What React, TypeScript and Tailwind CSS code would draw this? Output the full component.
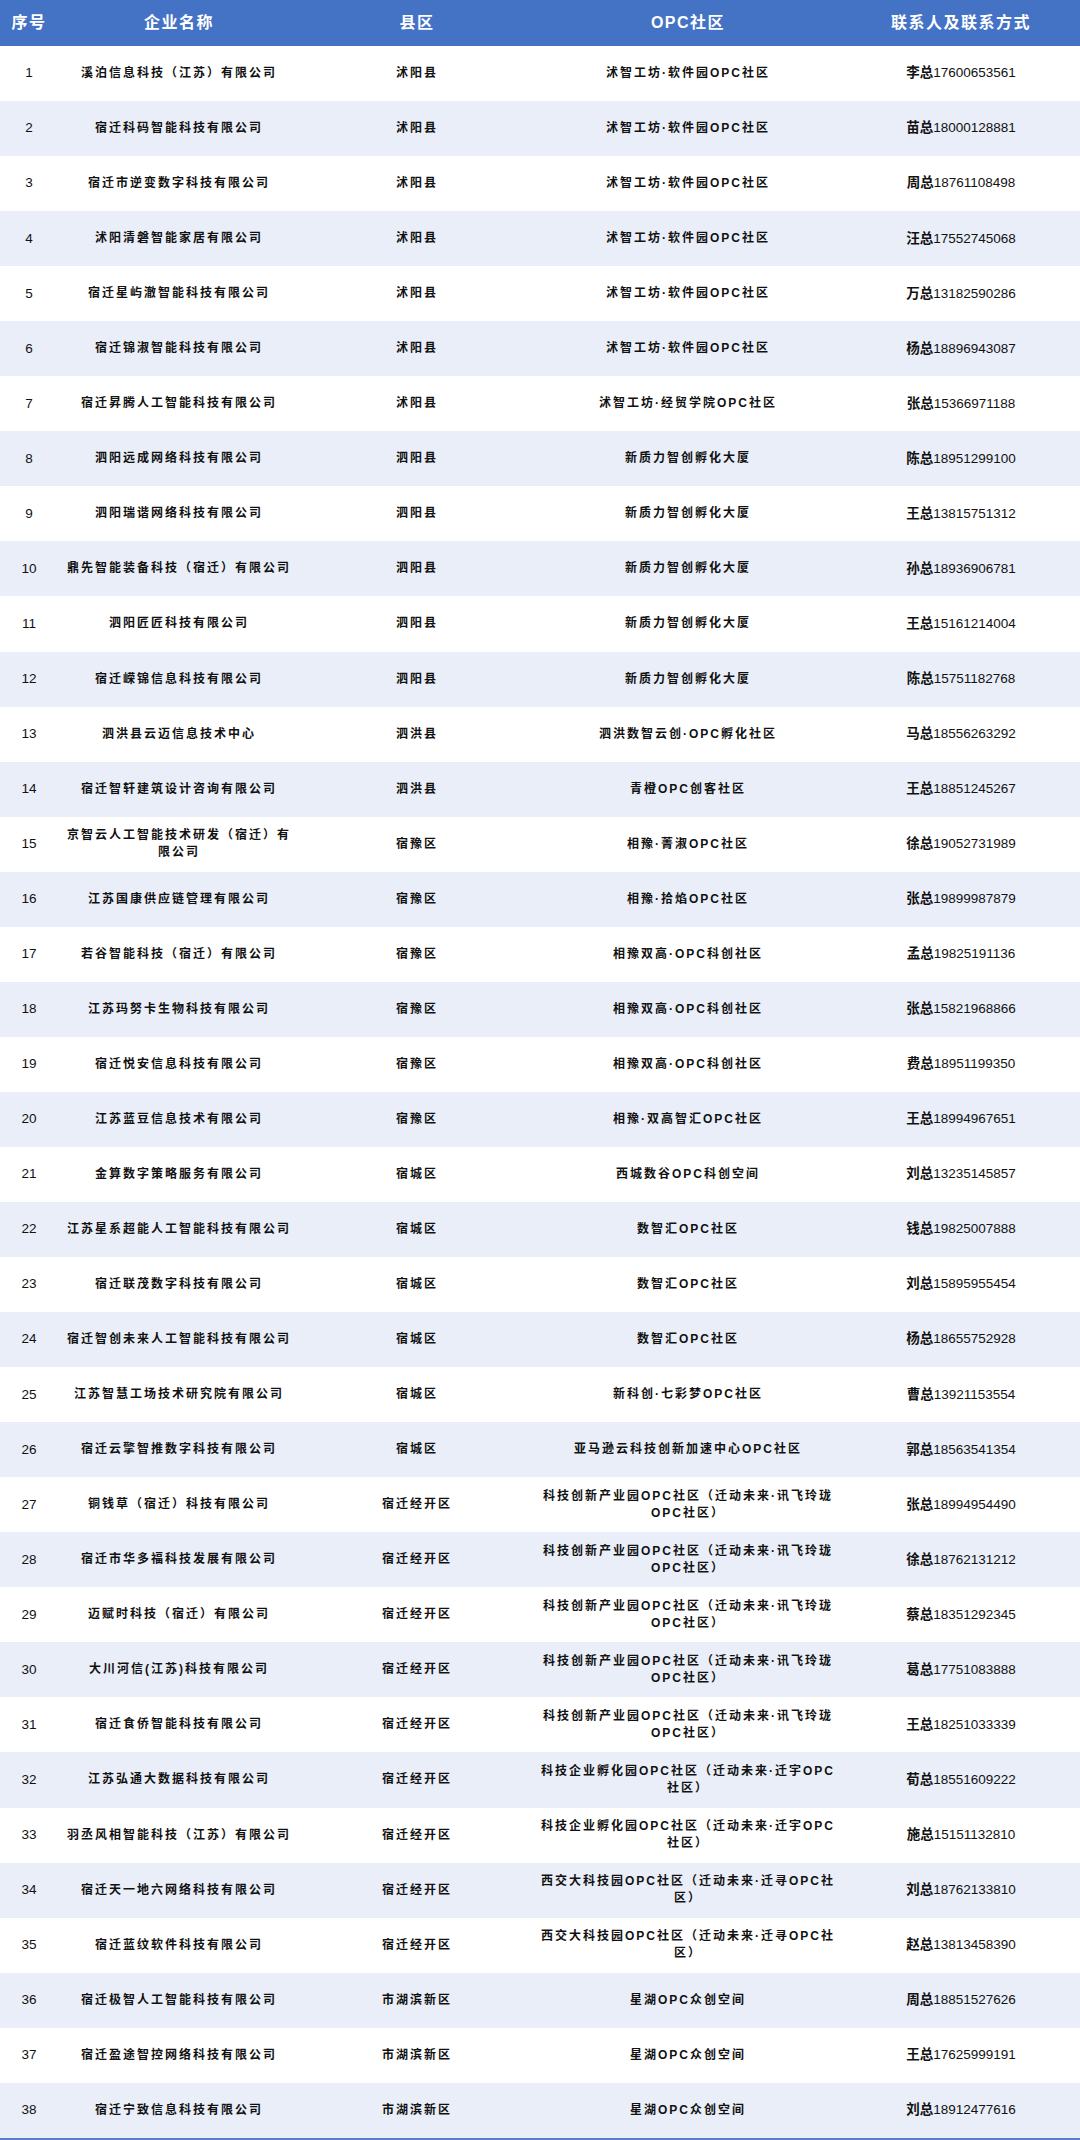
import React from "react";

type Row = [string, string, string, string];

const rows: Row[] = [
  ["溪泊信息科技（江苏）有限公司", "沭阳县", "沭智工坊·软件园OPC社区", "李总17600653561"],
  ["宿迁科码智能科技有限公司", "沭阳县", "沭智工坊·软件园OPC社区", "苗总18000128881"],
  ["宿迁市逆变数字科技有限公司", "沭阳县", "沭智工坊·软件园OPC社区", "周总18761108498"],
  ["沭阳清磐智能家居有限公司", "沭阳县", "沭智工坊·软件园OPC社区", "汪总17552745068"],
  ["宿迁星屿澈智能科技有限公司", "沭阳县", "沭智工坊·软件园OPC社区", "万总13182590286"],
  ["宿迁锦淑智能科技有限公司", "沭阳县", "沭智工坊·软件园OPC社区", "杨总18896943087"],
  ["宿迁昇腾人工智能科技有限公司", "沭阳县", "沭智工坊·经贸学院OPC社区", "张总15366971188"],
  ["泗阳远成网络科技有限公司", "泗阳县", "新质力智创孵化大厦", "陈总18951299100"],
  ["泗阳瑞谐网络科技有限公司", "泗阳县", "新质力智创孵化大厦", "王总13815751312"],
  ["鼎先智能装备科技（宿迁）有限公司", "泗阳县", "新质力智创孵化大厦", "孙总18936906781"],
  ["泗阳匠匠科技有限公司", "泗阳县", "新质力智创孵化大厦", "王总15161214004"],
  ["宿迁嵘锦信息科技有限公司", "泗阳县", "新质力智创孵化大厦", "陈总15751182768"],
  ["泗洪县云迈信息技术中心", "泗洪县", "泗洪数智云创·OPC孵化社区", "马总18556263292"],
  ["宿迁智轩建筑设计咨询有限公司", "泗洪县", "青橙OPC创客社区", "王总18851245267"],
  ["京智云人工智能技术研发（宿迁）有\n限公司", "宿豫区", "相豫·菁淑OPC社区", "徐总19052731989"],
  ["江苏国康供应链管理有限公司", "宿豫区", "相豫·拾焰OPC社区", "张总19899987879"],
  ["若谷智能科技（宿迁）有限公司", "宿豫区", "相豫双高·OPC科创社区", "孟总19825191136"],
  ["江苏玛努卡生物科技有限公司", "宿豫区", "相豫双高·OPC科创社区", "张总15821968866"],
  ["宿迁悦安信息科技有限公司", "宿豫区", "相豫双高·OPC科创社区", "费总18951199350"],
  ["江苏蓝豆信息技术有限公司", "宿豫区", "相豫·双高智汇OPC社区", "王总18994967651"],
  ["金算数字策略服务有限公司", "宿城区", "西城数谷OPC科创空间", "刘总13235145857"],
  ["江苏星系超能人工智能科技有限公司", "宿城区", "数智汇OPC社区", "钱总19825007888"],
  ["宿迁联茂数字科技有限公司", "宿城区", "数智汇OPC社区", "刘总15895955454"],
  ["宿迁智创未来人工智能科技有限公司", "宿城区", "数智汇OPC社区", "杨总18655752928"],
  ["江苏智慧工场技术研究院有限公司", "宿城区", "新科创·七彩梦OPC社区", "曹总13921153554"],
  ["宿迁云擎智推数字科技有限公司", "宿城区", "亚马逊云科技创新加速中心OPC社区", "郭总18563541354"],
  ["铜钱草（宿迁）科技有限公司", "宿迁经开区", "科技创新产业园OPC社区（迁动未来·讯飞玲珑\nOPC社区）", "张总18994954490"],
  ["宿迁市华多福科技发展有限公司", "宿迁经开区", "科技创新产业园OPC社区（迁动未来·讯飞玲珑\nOPC社区）", "徐总18762131212"],
  ["迈赋时科技（宿迁）有限公司", "宿迁经开区", "科技创新产业园OPC社区（迁动未来·讯飞玲珑\nOPC社区）", "蔡总18351292345"],
  ["大川河信(江苏)科技有限公司", "宿迁经开区", "科技创新产业园OPC社区（迁动未来·讯飞玲珑\nOPC社区）", "葛总17751083888"],
  ["宿迁食侨智能科技有限公司", "宿迁经开区", "科技创新产业园OPC社区（迁动未来·讯飞玲珑\nOPC社区）", "王总18251033339"],
  ["江苏弘通大数据科技有限公司", "宿迁经开区", "科技企业孵化园OPC社区（迁动未来·迁宇OPC\n社区）", "荀总18551609222"],
  ["羽丞风相智能科技（江苏）有限公司", "宿迁经开区", "科技企业孵化园OPC社区（迁动未来·迁宇OPC\n社区）", "施总15151132810"],
  ["宿迁天一地六网络科技有限公司", "宿迁经开区", "西交大科技园OPC社区（迁动未来·迁寻OPC社\n区）", "刘总18762133810"],
  ["宿迁蓝纹软件科技有限公司", "宿迁经开区", "西交大科技园OPC社区（迁动未来·迁寻OPC社\n区）", "赵总13813458390"],
  ["宿迁极智人工智能科技有限公司", "市湖滨新区", "星湖OPC众创空间", "周总18851527626"],
  ["宿迁盈途智控网络科技有限公司", "市湖滨新区", "星湖OPC众创空间", "王总17625999191"],
  ["宿迁宁致信息科技有限公司", "市湖滨新区", "星湖OPC众创空间", "刘总18912477616"],
];

function Lines({ text }: { text: string }) {
  const parts = text.split("\n");
  return (
    <>
      {parts.map((p, i) => (
        <span key={i} className="block whitespace-nowrap">
          {p}
        </span>
      ))}
    </>
  );
}

export default function App() {
  return (
    <div className="w-[1080px] bg-white font-['Liberation_Sans','Noto_Sans_CJK_SC',sans-serif] text-[#111]">
      <div className="grid h-[46px] grid-cols-[58px_242px_234px_308px_238px] items-center bg-[#4472c4] text-[16px] font-bold tracking-[1.5px] text-white">
        <div className="text-center">序号</div>
        <div className="text-center">企业名称</div>
        <div className="text-center">县区</div>
        <div className="text-center">OPC社区</div>
        <div className="text-center">联系人及联系方式</div>
      </div>
      <div className="border-b-2 border-[#5b7fc9]">
        {rows.map((r, i) => (
          <div
            key={i}
            className={`grid h-[55.05px] grid-cols-[58px_242px_234px_308px_238px] items-center ${
              i % 2 === 1 ? "bg-[#e9eef8]" : "bg-white"
            }`}
          >
            <div className="text-center text-[13.5px]">{i + 1}</div>
            <div className="text-center text-[12px] font-semibold leading-[17px] tracking-[2px]">
              <Lines text={r[0]} />
            </div>
            <div className="text-center text-[12px] font-semibold leading-[17px] tracking-[2px]">
              {r[1]}
            </div>
            <div className="text-center text-[12px] font-semibold leading-[17px] tracking-[2px]">
              <Lines text={r[2]} />
            </div>
            <div className="text-center text-[13.5px]">
              <span className="font-semibold">{r[3].slice(0, 2)}</span>
              {r[3].slice(2)}
            </div>
          </div>
        ))}
      </div>
    </div>
  );
}
